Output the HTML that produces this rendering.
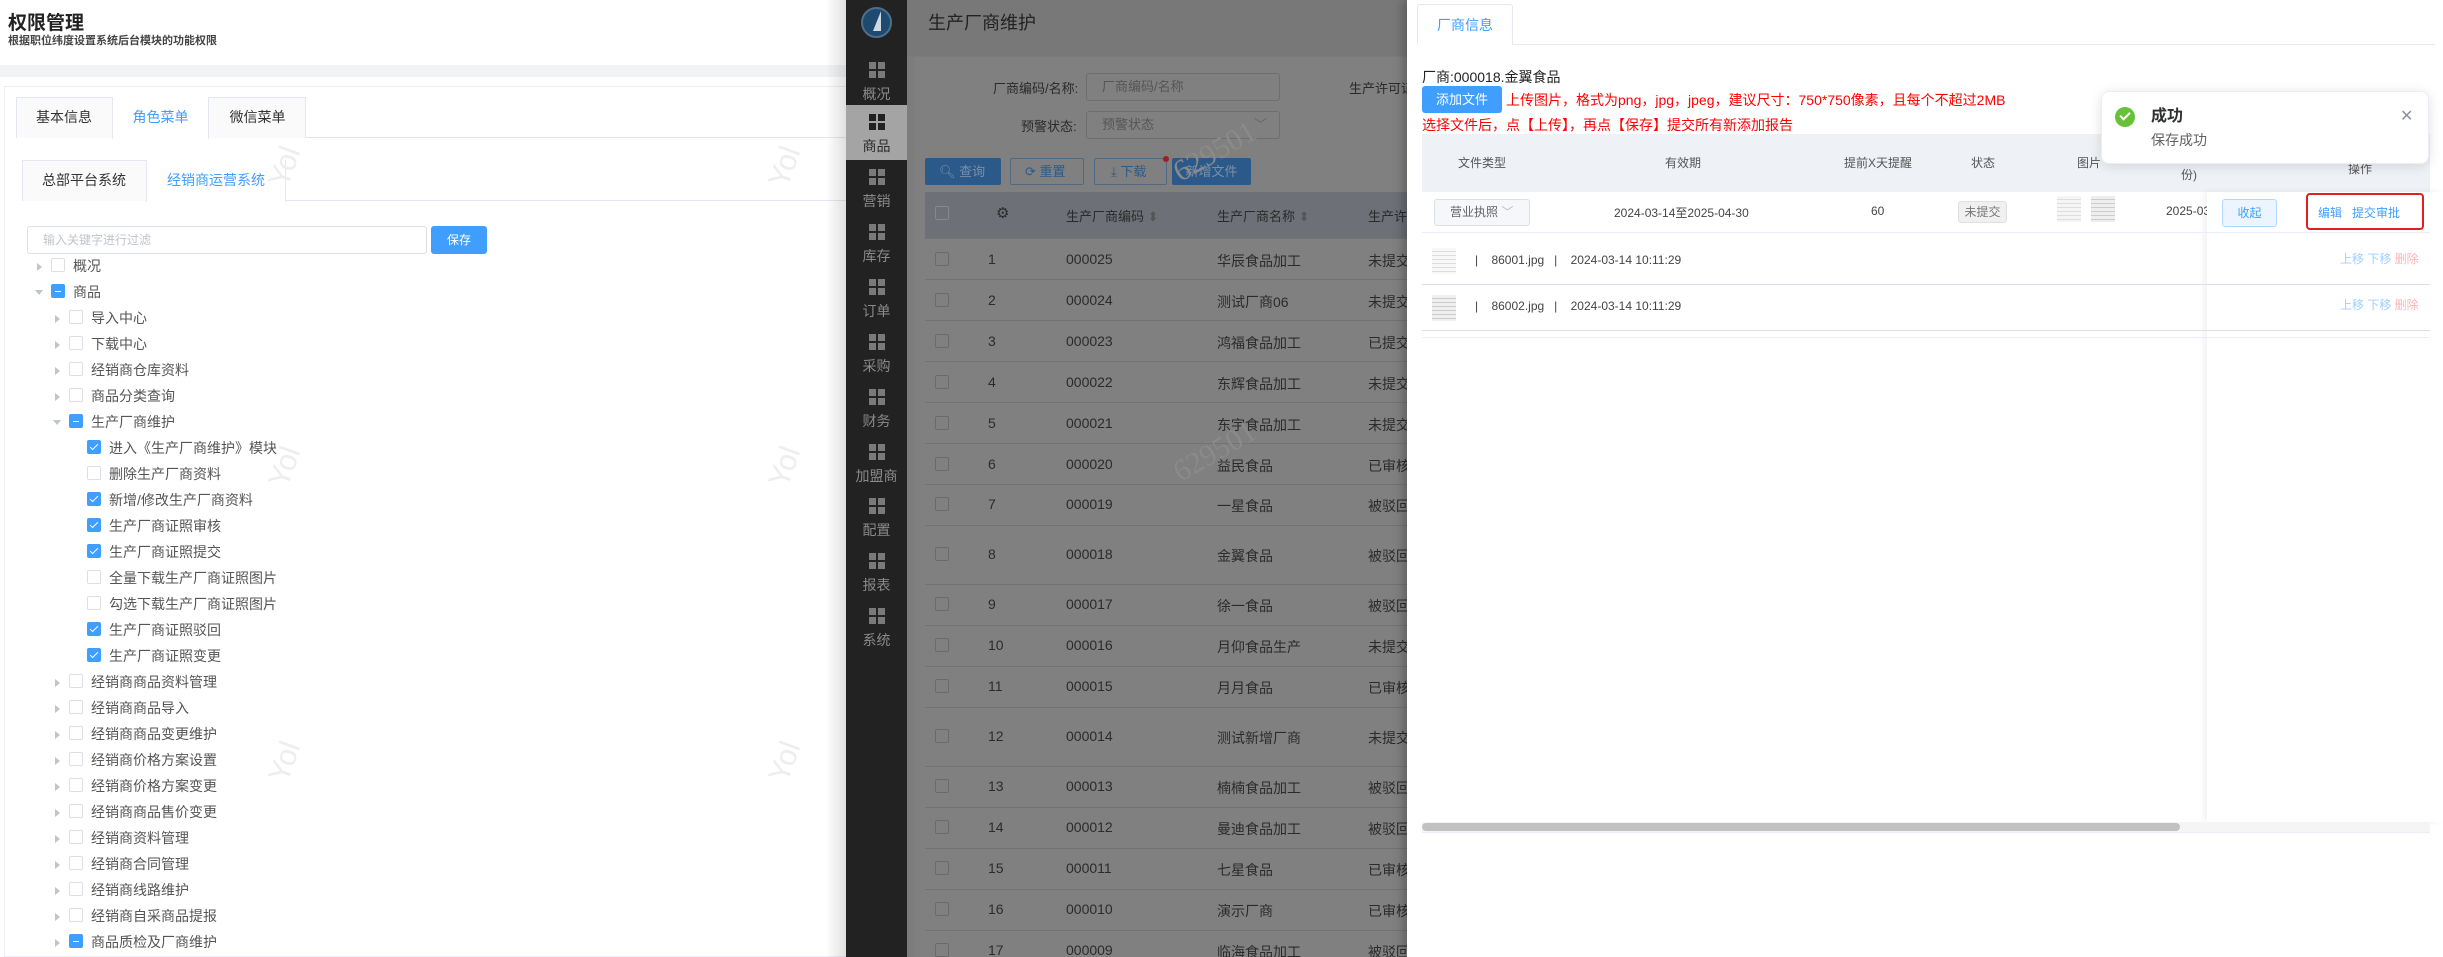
<!DOCTYPE html>
<html><head><meta charset="utf-8"><style>
*{margin:0;padding:0;box-sizing:border-box}
html{width:2443px;height:957px;overflow:hidden}
body{width:2443px;height:957px;overflow:hidden;position:relative;background:#fff;font-family:"Liberation Sans","Noto Sans CJK SC",sans-serif;color:#333}
.a{position:absolute;white-space:nowrap}
.tr{position:absolute;width:500px;height:26px;line-height:26px;font-size:14px;color:#555;white-space:nowrap}
.tr .ar{position:absolute;top:10px;width:0;height:0;border-top:4px solid transparent;border-bottom:4px solid transparent;border-left:5px solid #c0c4cc}
.tr .ad{position:absolute;top:11px;width:0;height:0;border-left:4px solid transparent;border-right:4px solid transparent;border-top:5px solid #c0c4cc}
.cb{position:absolute;top:5px;width:14px;height:14px;border:1px solid #dcdfe6;border-radius:2px;background:#fff}
.cb.on,.cb.ind{background:#409eff;border-color:#409eff}
.cb.on:after{content:"";position:absolute;left:4px;top:1px;width:3px;height:7px;border:solid #fff;border-width:0 1px 1px 0;transform:rotate(45deg)}
.cb.ind:after{content:"";position:absolute;left:3px;top:6px;width:6px;height:1px;background:#fff}
.tx{position:absolute;white-space:nowrap}
.wm{position:absolute;color:#eee;font-size:30px;transform:rotate(-70deg)}
.mrow{position:absolute;left:925px;width:482px;border-top:1px solid #737373;font-size:14px;color:#2b2b2b;white-space:nowrap}
.mrow span{position:absolute;white-space:nowrap}
.sb{position:absolute;left:846px;width:61px;text-align:center;color:#8a8a8a;font-size:14px;white-space:nowrap}
.sb i{display:block;margin:0 auto 6px;width:16px;height:16px;background:
linear-gradient(#7a7a7a,#7a7a7a) 0 0/7px 7px no-repeat,linear-gradient(#7a7a7a,#7a7a7a) 9px 0/7px 7px no-repeat,linear-gradient(#7a7a7a,#7a7a7a) 0 9px/7px 7px no-repeat,linear-gradient(#7a7a7a,#7a7a7a) 9px 9px/7px 7px no-repeat}
</style></head><body>

<!-- LEFT PANEL -->
<div class="a" style="left:0;top:0;width:846px;height:957px;background:#fff"></div>
<div class="a" style="left:8px;top:8px;font-size:19px;font-weight:bold;color:#222">权限管理</div>
<div class="a" style="left:8px;top:32px;font-size:11px;font-weight:bold;color:#444">根据职位纬度设置系统后台模块的功能权限</div>
<div class="a" style="left:0;top:65px;width:846px;height:12px;background:#f2f3f5"></div>
<div class="a" style="left:4px;top:86px;width:842px;height:871px;border:1px solid #ebeef5;border-right:none"></div>
<div class="a" style="left:16px;top:137px;width:830px;border-top:1px solid #e4e7ed"></div>
<div class="a" style="left:16px;top:97px;width:290px;height:41px;border:1px solid #e4e7ed;border-bottom:none;background:#fafafa"></div>
<div class="a" style="left:112px;top:97px;width:97px;height:42px;background:#fff;border-left:1px solid #e4e7ed;border-right:1px solid #e4e7ed"></div>
<div class="a" style="left:16px;top:97px;width:96px;line-height:40px;text-align:center;font-size:14px;color:#333">基本信息</div>
<div class="a" style="left:112px;top:97px;width:97px;line-height:40px;text-align:center;font-size:14px;color:#409eff">角色菜单</div>
<div class="a" style="left:209px;top:97px;width:97px;line-height:40px;text-align:center;font-size:14px;color:#333">微信菜单</div>
<div class="a" style="left:22px;top:200px;width:824px;border-top:1px solid #e4e7ed"></div>
<div class="a" style="left:22px;top:160px;width:264px;height:41px;border:1px solid #e4e7ed;border-bottom:none;background:#fafafa"></div>
<div class="a" style="left:146px;top:160px;width:140px;height:42px;background:#fff;border-left:1px solid #e4e7ed;border-right:1px solid #e4e7ed"></div>
<div class="a" style="left:22px;top:160px;width:124px;line-height:40px;text-align:center;font-size:14px;color:#333">总部平台系统</div>
<div class="a" style="left:146px;top:160px;width:140px;line-height:40px;text-align:center;font-size:14px;color:#409eff">经销商运营系统</div>
<div class="a" style="left:27px;top:226px;width:400px;height:28px;border:1px solid #dcdfe6;border-radius:3px;font-size:12px;color:#c0c4cc;line-height:26px;padding-left:15px">输入关键字进行过滤</div>
<div class="a" style="left:431px;top:226px;width:56px;height:28px;background:#409eff;border-radius:3px;color:#fff;font-size:12px;line-height:28px;text-align:center">保存</div>

<div class="tr" style="top:253px;left:0"><i class="ar" style="left:37px"></i><i class="cb" style="left:51px"></i><span class="tx" style="left:73px">概况</span></div>
<div class="tr" style="top:279px;left:0"><i class="ad" style="left:35px"></i><i class="cb ind" style="left:51px"></i><span class="tx" style="left:73px">商品</span></div>
<div class="tr" style="top:305px;left:18px"><i class="ar" style="left:37px"></i><i class="cb" style="left:51px"></i><span class="tx" style="left:73px">导入中心</span></div>
<div class="tr" style="top:331px;left:18px"><i class="ar" style="left:37px"></i><i class="cb" style="left:51px"></i><span class="tx" style="left:73px">下载中心</span></div>
<div class="tr" style="top:357px;left:18px"><i class="ar" style="left:37px"></i><i class="cb" style="left:51px"></i><span class="tx" style="left:73px">经销商仓库资料</span></div>
<div class="tr" style="top:383px;left:18px"><i class="ar" style="left:37px"></i><i class="cb" style="left:51px"></i><span class="tx" style="left:73px">商品分类查询</span></div>
<div class="tr" style="top:409px;left:18px"><i class="ad" style="left:35px"></i><i class="cb ind" style="left:51px"></i><span class="tx" style="left:73px">生产厂商维护</span></div>
<div class="tr" style="top:435px;left:36px"><i class="cb on" style="left:51px"></i><span class="tx" style="left:73px">进入《生产厂商维护》模块</span></div>
<div class="tr" style="top:461px;left:36px"><i class="cb" style="left:51px"></i><span class="tx" style="left:73px">删除生产厂商资料</span></div>
<div class="tr" style="top:487px;left:36px"><i class="cb on" style="left:51px"></i><span class="tx" style="left:73px">新增/修改生产厂商资料</span></div>
<div class="tr" style="top:513px;left:36px"><i class="cb on" style="left:51px"></i><span class="tx" style="left:73px">生产厂商证照审核</span></div>
<div class="tr" style="top:539px;left:36px"><i class="cb on" style="left:51px"></i><span class="tx" style="left:73px">生产厂商证照提交</span></div>
<div class="tr" style="top:565px;left:36px"><i class="cb" style="left:51px"></i><span class="tx" style="left:73px">全量下载生产厂商证照图片</span></div>
<div class="tr" style="top:591px;left:36px"><i class="cb" style="left:51px"></i><span class="tx" style="left:73px">勾选下载生产厂商证照图片</span></div>
<div class="tr" style="top:617px;left:36px"><i class="cb on" style="left:51px"></i><span class="tx" style="left:73px">生产厂商证照驳回</span></div>
<div class="tr" style="top:643px;left:36px"><i class="cb on" style="left:51px"></i><span class="tx" style="left:73px">生产厂商证照变更</span></div>
<div class="tr" style="top:669px;left:18px"><i class="ar" style="left:37px"></i><i class="cb" style="left:51px"></i><span class="tx" style="left:73px">经销商商品资料管理</span></div>
<div class="tr" style="top:695px;left:18px"><i class="ar" style="left:37px"></i><i class="cb" style="left:51px"></i><span class="tx" style="left:73px">经销商商品导入</span></div>
<div class="tr" style="top:721px;left:18px"><i class="ar" style="left:37px"></i><i class="cb" style="left:51px"></i><span class="tx" style="left:73px">经销商商品变更维护</span></div>
<div class="tr" style="top:747px;left:18px"><i class="ar" style="left:37px"></i><i class="cb" style="left:51px"></i><span class="tx" style="left:73px">经销商价格方案设置</span></div>
<div class="tr" style="top:773px;left:18px"><i class="ar" style="left:37px"></i><i class="cb" style="left:51px"></i><span class="tx" style="left:73px">经销商价格方案变更</span></div>
<div class="tr" style="top:799px;left:18px"><i class="ar" style="left:37px"></i><i class="cb" style="left:51px"></i><span class="tx" style="left:73px">经销商商品售价变更</span></div>
<div class="tr" style="top:825px;left:18px"><i class="ar" style="left:37px"></i><i class="cb" style="left:51px"></i><span class="tx" style="left:73px">经销商资料管理</span></div>
<div class="tr" style="top:851px;left:18px"><i class="ar" style="left:37px"></i><i class="cb" style="left:51px"></i><span class="tx" style="left:73px">经销商合同管理</span></div>
<div class="tr" style="top:877px;left:18px"><i class="ar" style="left:37px"></i><i class="cb" style="left:51px"></i><span class="tx" style="left:73px">经销商线路维护</span></div>
<div class="tr" style="top:903px;left:18px"><i class="ar" style="left:37px"></i><i class="cb" style="left:51px"></i><span class="tx" style="left:73px">经销商自采商品提报</span></div>
<div class="tr" style="top:929px;left:18px"><i class="ar" style="left:37px"></i><i class="cb ind" style="left:51px"></i><span class="tx" style="left:73px">商品质检及厂商维护</span></div>
<div class="wm" style="left:265px;top:150px">Yol</div>
<div class="wm" style="left:765px;top:150px">Yol</div>
<div class="wm" style="left:265px;top:450px">Yol</div>
<div class="wm" style="left:765px;top:450px">Yol</div>
<div class="wm" style="left:265px;top:745px">Yol</div>
<div class="wm" style="left:765px;top:745px">Yol</div>
<div class="a" style="left:826px;top:0;width:20px;height:957px;background:linear-gradient(90deg,rgba(0,0,0,0),rgba(0,0,0,.12))"></div>

<!-- MIDDLE -->
<div class="a" style="left:846px;top:0;width:561px;height:957px;background:#7c7c7c"></div>
<div class="a" style="left:846px;top:0;width:61px;height:957px;background:#222"></div>
<div class="a" style="left:861px;top:7px;width:31px;height:31px;border-radius:50%;background:#1d4a6e;border:2px solid #4d6f8a"></div>
<div class="a" style="left:873px;top:11px;width:0;height:0;border-left:8px solid transparent;border-bottom:20px solid #cfd8e0"></div>
<div class="a" style="left:846px;top:105px;width:61px;height:55px;background:#a4a4a4"></div>
<div class="sb" style="top:62px"><i></i>概况</div>
<div class="sb" style="top:114px;color:#2a2a2a"><i style="background:linear-gradient(#222,#222) 0 0/7px 7px no-repeat,linear-gradient(#222,#222) 9px 0/7px 7px no-repeat,linear-gradient(#222,#222) 0 9px/7px 7px no-repeat,linear-gradient(#222,#222) 9px 9px/7px 7px no-repeat"></i>商品</div>
<div class="sb" style="top:169px"><i></i>营销</div>
<div class="sb" style="top:224px"><i></i>库存</div>
<div class="sb" style="top:279px"><i></i>订单</div>
<div class="sb" style="top:334px"><i></i>采购</div>
<div class="sb" style="top:389px"><i></i>财务</div>
<div class="sb" style="top:444px"><i></i>加盟商</div>
<div class="sb" style="top:498px"><i></i>配置</div>
<div class="sb" style="top:553px"><i></i>报表</div>
<div class="sb" style="top:608px"><i></i>系统</div>
<div class="a" style="left:907px;top:0;width:500px;height:56px;background:#787878"></div>
<div class="a" style="left:928px;top:9px;font-size:18px;color:#222">生产厂商维护</div>
<div class="a" style="left:915px;top:57px;width:492px;height:900px;background:#808080"></div>
<div class="a" style="left:993px;top:78px;font-size:13px;color:#2a2a2a">厂商编码/名称:</div>
<div class="a" style="left:1086px;top:73px;width:194px;height:28px;border:1px solid #6e6e6e;border-radius:3px;font-size:13px;color:#555;line-height:26px;padding-left:15px">厂商编码/名称</div>
<div class="a" style="left:1349px;top:78px;font-size:13px;color:#2a2a2a">生产许可证</div>
<div class="a" style="left:1021px;top:116px;font-size:13px;color:#2a2a2a">预警状态:</div>
<div class="a" style="left:1086px;top:111px;width:194px;height:28px;border:1px solid #6e6e6e;border-radius:3px;font-size:13px;color:#555;line-height:26px;padding-left:15px">预警状态<span style="position:absolute;right:12px;color:#666">﹀</span></div>
<div class="a" style="left:925px;top:158px;width:76px;height:27px;background:#2b5a8a;border-radius:2px;color:#7a8ea5;font-size:13px;line-height:27px;padding-left:14px">🔍︎ 查询</div>
<div class="a" style="left:1010px;top:158px;width:74px;height:27px;border:1px solid #4f6a86;border-radius:2px;color:#2b5a8a;font-size:13px;line-height:25px;padding-left:14px">⟳ 重置</div>
<div class="a" style="left:1094px;top:158px;width:73px;height:27px;border:1px solid #4f6a86;border-radius:2px;color:#2b5a8a;font-size:13px;line-height:25px;padding-left:16px">⤓ 下载</div>
<div class="a" style="left:1163px;top:156px;width:6px;height:6px;border-radius:50%;background:#a02020"></div>
<div class="a" style="left:1172px;top:158px;width:79px;height:27px;background:#2b5a8a;border-radius:2px;color:#7a8ea5;font-size:13px;line-height:27px;text-align:center">新增文件</div>
<div class="a" style="left:925px;top:192px;width:482px;height:46px;background:#6e7078"></div>
<div class="a" style="left:935px;top:206px;width:14px;height:14px;border:1px solid #888;border-radius:2px"></div>
<div class="a" style="left:996px;top:204px;font-size:15px;color:#2a2a2a">⚙</div>
<div class="a" style="left:1066px;top:206px;font-size:13px;color:#2a2a2a">生产厂商编码 <span style="color:#555">⬍</span></div>
<div class="a" style="left:1217px;top:206px;font-size:13px;color:#2a2a2a">生产厂商名称 <span style="color:#555">⬍</span></div>
<div class="a" style="left:1368px;top:206px;font-size:13px;color:#2a2a2a">生产许可</div>

<div class="mrow" style="top:238px;height:41px"><span style="left:10px;top:13px;width:14px;height:14px;border:1px solid #6a6a6a;border-radius:2px"></span><span style="left:63px;top:12px">1</span><span style="left:141px;top:12px">000025</span><span style="left:292px;top:12px">华辰食品加工</span><span style="left:443px;top:12px">未提交</span></div>
<div class="mrow" style="top:279px;height:41px"><span style="left:10px;top:13px;width:14px;height:14px;border:1px solid #6a6a6a;border-radius:2px"></span><span style="left:63px;top:12px">2</span><span style="left:141px;top:12px">000024</span><span style="left:292px;top:12px">测试厂商06</span><span style="left:443px;top:12px">未提交</span></div>
<div class="mrow" style="top:320px;height:41px"><span style="left:10px;top:13px;width:14px;height:14px;border:1px solid #6a6a6a;border-radius:2px"></span><span style="left:63px;top:12px">3</span><span style="left:141px;top:12px">000023</span><span style="left:292px;top:12px">鸿福食品加工</span><span style="left:443px;top:12px">已提交</span></div>
<div class="mrow" style="top:361px;height:41px"><span style="left:10px;top:13px;width:14px;height:14px;border:1px solid #6a6a6a;border-radius:2px"></span><span style="left:63px;top:12px">4</span><span style="left:141px;top:12px">000022</span><span style="left:292px;top:12px">东辉食品加工</span><span style="left:443px;top:12px">未提交</span></div>
<div class="mrow" style="top:402px;height:41px"><span style="left:10px;top:13px;width:14px;height:14px;border:1px solid #6a6a6a;border-radius:2px"></span><span style="left:63px;top:12px">5</span><span style="left:141px;top:12px">000021</span><span style="left:292px;top:12px">东宇食品加工</span><span style="left:443px;top:12px">未提交</span></div>
<div class="mrow" style="top:443px;height:41px"><span style="left:10px;top:13px;width:14px;height:14px;border:1px solid #6a6a6a;border-radius:2px"></span><span style="left:63px;top:12px">6</span><span style="left:141px;top:12px">000020</span><span style="left:292px;top:12px">益民食品</span><span style="left:443px;top:12px">已审核</span></div>
<div class="mrow" style="top:484px;height:41px"><span style="left:10px;top:12px;width:14px;height:14px;border:1px solid #6a6a6a;border-radius:2px"></span><span style="left:63px;top:11px">7</span><span style="left:141px;top:11px">000019</span><span style="left:292px;top:11px">一星食品</span><span style="left:443px;top:11px">被驳回</span></div>
<div class="mrow" style="top:525px;height:59px"><span style="left:10px;top:21px;width:14px;height:14px;border:1px solid #6a6a6a;border-radius:2px"></span><span style="left:63px;top:20px">8</span><span style="left:141px;top:20px">000018</span><span style="left:292px;top:20px">金翼食品</span><span style="left:443px;top:20px">被驳回</span></div>
<div class="mrow" style="top:584px;height:41px"><span style="left:10px;top:12px;width:14px;height:14px;border:1px solid #6a6a6a;border-radius:2px"></span><span style="left:63px;top:11px">9</span><span style="left:141px;top:11px">000017</span><span style="left:292px;top:11px">徐一食品</span><span style="left:443px;top:11px">被驳回</span></div>
<div class="mrow" style="top:625px;height:41px"><span style="left:10px;top:12px;width:14px;height:14px;border:1px solid #6a6a6a;border-radius:2px"></span><span style="left:63px;top:11px">10</span><span style="left:141px;top:11px">000016</span><span style="left:292px;top:11px">月仰食品生产</span><span style="left:443px;top:11px">未提交</span></div>
<div class="mrow" style="top:666px;height:41px"><span style="left:10px;top:12px;width:14px;height:14px;border:1px solid #6a6a6a;border-radius:2px"></span><span style="left:63px;top:11px">11</span><span style="left:141px;top:11px">000015</span><span style="left:292px;top:11px">月月食品</span><span style="left:443px;top:11px">已审核</span></div>
<div class="mrow" style="top:707px;height:59px"><span style="left:10px;top:21px;width:14px;height:14px;border:1px solid #6a6a6a;border-radius:2px"></span><span style="left:63px;top:20px">12</span><span style="left:141px;top:20px">000014</span><span style="left:292px;top:20px">测试新增厂商</span><span style="left:443px;top:20px">未提交</span></div>
<div class="mrow" style="top:766px;height:41px"><span style="left:10px;top:12px;width:14px;height:14px;border:1px solid #6a6a6a;border-radius:2px"></span><span style="left:63px;top:11px">13</span><span style="left:141px;top:11px">000013</span><span style="left:292px;top:11px">楠楠食品加工</span><span style="left:443px;top:11px">被驳回</span></div>
<div class="mrow" style="top:807px;height:41px"><span style="left:10px;top:12px;width:14px;height:14px;border:1px solid #6a6a6a;border-radius:2px"></span><span style="left:63px;top:11px">14</span><span style="left:141px;top:11px">000012</span><span style="left:292px;top:11px">曼迪食品加工</span><span style="left:443px;top:11px">被驳回</span></div>
<div class="mrow" style="top:848px;height:41px"><span style="left:10px;top:12px;width:14px;height:14px;border:1px solid #6a6a6a;border-radius:2px"></span><span style="left:63px;top:11px">15</span><span style="left:141px;top:11px">000011</span><span style="left:292px;top:11px">七星食品</span><span style="left:443px;top:11px">已审核</span></div>
<div class="mrow" style="top:889px;height:41px"><span style="left:10px;top:12px;width:14px;height:14px;border:1px solid #6a6a6a;border-radius:2px"></span><span style="left:63px;top:11px">16</span><span style="left:141px;top:11px">000010</span><span style="left:292px;top:11px">演示厂商</span><span style="left:443px;top:11px">已审核</span></div>
<div class="mrow" style="top:930px;height:41px"><span style="left:10px;top:12px;width:14px;height:14px;border:1px solid #6a6a6a;border-radius:2px"></span><span style="left:63px;top:11px">17</span><span style="left:141px;top:11px">000009</span><span style="left:292px;top:11px">临海食品加工</span><span style="left:443px;top:11px">被驳回</span></div>
<div class="a" style="left:1170px;top:135px;font-size:30px;color:#8a8a8a;font-family:'Liberation Serif',serif;transform:rotate(-30deg)">629501</div>
<div class="a" style="left:1170px;top:435px;font-size:30px;color:#8a8a8a;font-family:'Liberation Serif',serif;transform:rotate(-30deg)">629501</div>

<!-- RIGHT DRAWER -->
<div class="a" style="left:1407px;top:0;width:1036px;height:957px;background:#fff;box-shadow:-4px 0 10px rgba(0,0,0,.25)"></div>
<div class="a" style="left:1417px;top:44px;width:1018px;border-top:1px solid #e4e7ed"></div>
<div class="a" style="left:1417px;top:4px;width:96px;height:41px;border:1px solid #e4e7ed;border-bottom:1px solid #fff;border-radius:3px 3px 0 0;background:#fff;color:#409eff;font-size:14px;line-height:40px;text-align:center">厂商信息</div>
<div class="a" style="left:1422px;top:67px;font-size:14px;color:#222">厂商:000018.金翼食品</div>
<div class="a" style="left:1422px;top:86px;width:80px;height:27px;background:#409eff;border-radius:3px;color:#fff;font-size:13px;line-height:27px;text-align:center">添加文件</div>
<div class="a" style="left:1506px;top:90px;font-size:14px;color:#f00">上传图片，格式为png，jpg，jpeg，建议尺寸：750*750像素，且每个不超过2MB</div>
<div class="a" style="left:1422px;top:115px;font-size:14px;color:#f00">选择文件后，点【上传】，再点【保存】提交所有新添加报告</div>
<div class="a" style="left:1422px;top:134px;width:1008px;height:58px;background:#eef1f6"></div>
<div class="a" style="left:1458px;top:154px;font-size:12px;color:#555">文件类型</div>
<div class="a" style="left:1665px;top:154px;font-size:12px;color:#555">有效期</div>
<div class="a" style="left:1844px;top:154px;font-size:12px;color:#555">提前X天提醒</div>
<div class="a" style="left:1971px;top:154px;font-size:12px;color:#555">状态</div>
<div class="a" style="left:2077px;top:154px;font-size:12px;color:#555">图片</div>
<div class="a" style="left:2181px;top:166px;font-size:12px;color:#555">份)</div>
<div class="a" style="left:2348px;top:160px;font-size:12px;color:#555">操作</div>
<div class="a" style="left:1434px;top:199px;width:96px;height:27px;border:1px solid #dcdfe6;border-radius:3px;background:#f5f7fa;font-size:12px;color:#606266;line-height:25px;padding-left:15px">营业执照 <span style="color:#bbb">﹀</span></div>
<div class="a" style="left:1614px;top:204px;font-size:12px;color:#444">2024-03-14至2025-04-30</div>
<div class="a" style="left:1871px;top:204px;font-size:12px;color:#444">60</div>
<div class="a" style="left:1958px;top:201px;width:49px;height:22px;background:#f0f0f0;border:1px solid #e0e0e0;border-radius:3px;font-size:12px;color:#777;line-height:20px;text-align:center">未提交</div>
<div class="a" style="left:2057px;top:196px;width:24px;height:26px;background:repeating-linear-gradient(#f5f5f5 0 3px,#ddd 3px 4px)"></div>
<div class="a" style="left:2091px;top:196px;width:24px;height:26px;background:repeating-linear-gradient(#eee 0 3px,#ccc 3px 4px)"></div>
<div class="a" style="left:2166px;top:204px;font-size:12px;color:#444">2025-03</div>
<div class="a" style="left:2207px;top:192px;width:236px;height:630px;background:#fff;box-shadow:-3px 0 6px rgba(0,0,0,.06)"></div>
<div class="a" style="left:2222px;top:199px;width:55px;height:28px;background:#ecf5ff;border:1px solid #b3d8ff;border-radius:3px;color:#409eff;font-size:12px;line-height:26px;text-align:center">收起</div>
<div class="a" style="left:2306px;top:193px;width:118px;height:37px;border:2px solid #e02020;border-radius:4px"></div>
<div class="a" style="left:2318px;top:204px;font-size:12px;color:#409eff">编辑&nbsp;&nbsp;&nbsp;提交审批</div>
<div class="a" style="left:1422px;top:232px;width:1008px;border-top:1px solid #ebeef5"></div>
<div class="a" style="left:1432px;top:248px;width:24px;height:26px;background:repeating-linear-gradient(#f8f8f8 0 3px,#ddd 3px 4px)"></div>
<div class="a" style="left:1475px;top:253px;font-size:12px;color:#444">|&nbsp;&nbsp;&nbsp; 86001.jpg &nbsp;&nbsp;|&nbsp;&nbsp;&nbsp; 2024-03-14 10:11:29</div>
<div class="a" style="left:2340px;top:250px;font-size:12px;color:#a0cfff">上移 下移 <span style="color:#fab6b6">删除</span></div>
<div class="a" style="left:1422px;top:284px;width:1008px;border-top:1px solid #dcdfe6"></div>
<div class="a" style="left:1432px;top:295px;width:24px;height:26px;background:repeating-linear-gradient(#f0f0f0 0 3px,#ccc 3px 4px)"></div>
<div class="a" style="left:1475px;top:299px;font-size:12px;color:#444">|&nbsp;&nbsp;&nbsp; 86002.jpg &nbsp;&nbsp;|&nbsp;&nbsp;&nbsp; 2024-03-14 10:11:29</div>
<div class="a" style="left:2340px;top:296px;font-size:12px;color:#a0cfff">上移 下移 <span style="color:#fab6b6">删除</span></div>
<div class="a" style="left:1422px;top:330px;width:1008px;border-top:1px solid #dcdfe6"></div>
<div class="a" style="left:1422px;top:337px;width:1008px;border-top:1px solid #ebeef5"></div>
<div class="a" style="left:1422px;top:822px;width:1008px;height:10px;background:#f5f5f5"></div>
<div class="a" style="left:1422px;top:823px;width:758px;height:8px;background:#c1c1c1;border-radius:4px"></div>
<div class="a" style="left:1422px;top:832px;width:1008px;border-top:1px solid #ebeef5"></div>
<div class="a" style="left:2101px;top:91px;width:328px;height:73px;background:#fff;border:1px solid #ebeef5;border-radius:8px;box-shadow:0 2px 12px rgba(0,0,0,.12)"></div>
<div class="a" style="left:2115px;top:107px;width:20px;height:20px;border-radius:50%;background:#67c23a"></div>
<div class="a" style="left:2122px;top:110px;width:6px;height:10px;border:solid #fff;border-width:0 2px 2px 0;transform:rotate(45deg)"></div>
<div class="a" style="left:2151px;top:102px;font-size:16px;font-weight:bold;color:#303133">成功</div>
<div class="a" style="left:2151px;top:130px;font-size:14px;color:#606266">保存成功</div>
<div class="a" style="left:2400px;top:106px;font-size:16px;color:#909399">✕</div>
</body></html>
